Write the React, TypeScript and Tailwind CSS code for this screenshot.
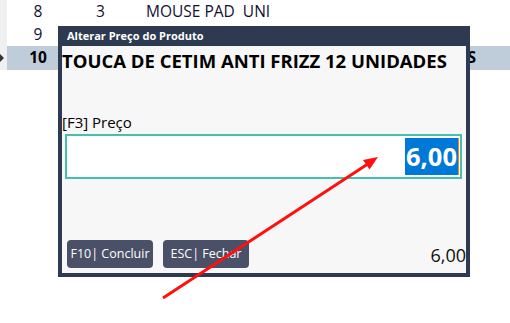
export default function App() {
  const rowFont = { fontFamily: '"Open Sans", "Noto Sans", sans-serif' };
  return (
    <div className="relative w-[510px] h-[323px] bg-white overflow-hidden" style={rowFont}>
      <div className="flex flex-col text-[15.5px] text-[#101030]">
        <div className="flex h-[23px] items-center">
          <div className="w-[7px] h-full bg-[#f0f0f0]" />
          <div className="w-[62px] text-center">8</div>
          <div className="w-[77px] pl-[27px]">3</div>
          <div className="whitespace-pre">MOUSE PAD  UNI</div>
        </div>
        <div className="flex h-[23px] items-center">
          <div className="w-[7px] h-full bg-[#f0f0f0]" />
          <div className="w-[62px] text-center">9</div>
          <div className="w-[77px] pl-[27px]"></div>
          <div></div>
        </div>
        <div className="flex h-[24px] items-center bg-[#bfccda]">
          <div className="w-[7px] h-full bg-[#f0f0f0] flex items-center">
            <div className="w-0 h-0 border-y-[4px] border-y-transparent border-l-[4px] border-l-[#333]" />
          </div>
          <div className="w-[62px] text-center font-bold text-black">10</div>
          <div className="flex-1 flex justify-end pr-[34px] font-bold text-black">S</div>
        </div>
      </div>

      <div className="absolute left-[58px] top-[26px] w-[412px] h-[251px] bg-[#2d3a4f] flex flex-col px-[4px] pb-[4px]">
        <div className="h-[20px] flex items-center pl-[5px] text-white text-[11px] font-bold">
          Alterar Preço do Produto
        </div>
        <div className="flex-1 bg-[#f7f7f7] flex flex-col">
          <div className="h-[30px] flex items-center text-[18.5px] font-bold text-black">
            TOUCA DE CETIM ANTI FRIZZ 12 UNIDADES
          </div>
          <div className="mt-[36px] h-[20px] flex items-center text-[15px] text-black">[F3] Preço</div>
          <div className="mt-[2px] ml-[3px] mr-[4px] h-[45px] border-2 border-[#45bfb0] bg-white flex items-center justify-end pr-[1px]">
            <div className="flex items-center">
              <span className="bg-[#0078d7] text-white font-bold text-[25.5px] leading-[37px] px-[1px]">6,00</span>
              <span className="w-[1px] h-[37px] bg-[#ff8000]" />
            </div>
          </div>
          <div className="flex-1" />
          <div className="flex items-end justify-between pl-[5px] pb-[5px]">
            <div className="flex gap-[10px]">
              <div className="w-[86px] h-[28px] rounded-[4px] bg-[#4a5068] text-white text-[12.5px] flex items-center justify-center">F10| Concluir</div>
              <div className="w-[86px] h-[28px] rounded-[4px] bg-[#4a5068] text-white text-[12.5px] flex items-center justify-center">ESC| Fechar</div>
            </div>
            <div className="text-[18px] text-[#101010] leading-[20px] pb-[3px]">6,00</div>
          </div>
        </div>
      </div>

      <svg className="absolute left-0 top-0" width="510" height="323">
        <line x1="163" y1="298" x2="367" y2="164.6" stroke="#ff1010" strokeWidth="3" />
        <polygon points="378,157 369.5,169.5 363,160" fill="#ff1010" />
      </svg>
    </div>
  );
}
